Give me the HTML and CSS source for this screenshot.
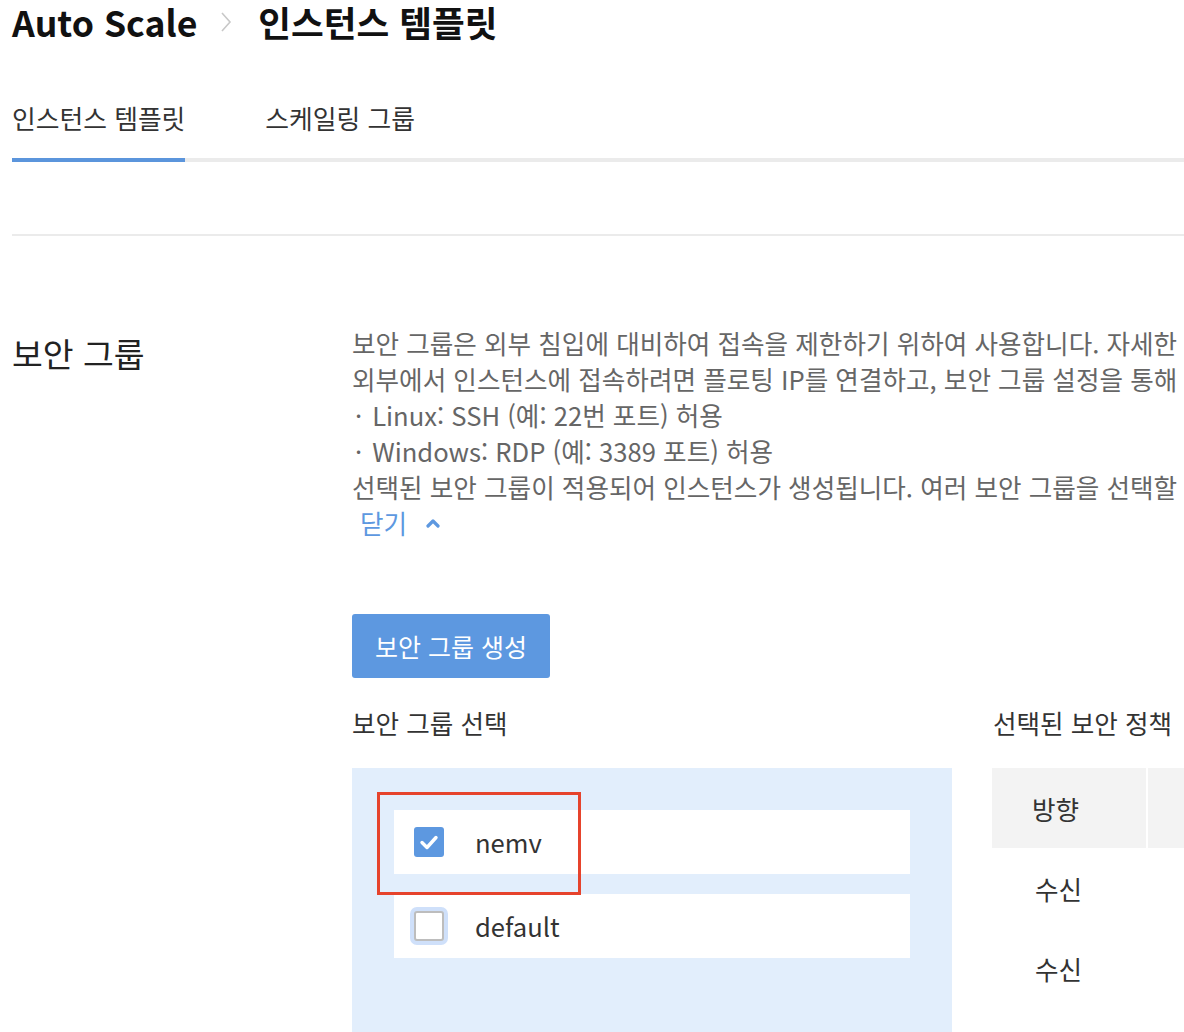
FILE: index.html
```html
<!DOCTYPE html>
<html lang="ko">
<head>
<meta charset="utf-8">
<title>인스턴스 템플릿</title>
<link rel="stylesheet" href="styles.css">
</head>
<body>
<div class="page">
  <h1 class="title">
    <span class="crumb">Auto Scale</span>
    <svg class="crumb-sep" width="14" height="22" viewBox="0 0 14 22" aria-hidden="true"><polyline points="3,2 11,11 3,20" fill="none" stroke="#c8c8c8" stroke-width="1.6"/></svg>
    <span class="crumb current">인스턴스 템플릿</span>
  </h1>

  <nav class="tabs">
    <a class="tab active">인스턴스 템플릿</a>
    <a class="tab">스케일링 그룹</a>
  </nav>

  <div class="divider"></div>

  <section class="section">
    <h2 class="section-title">보안 그룹</h2>
    <div class="section-body">
      <div class="desc">
        <p class="desc-line">보안 그룹은 외부 침입에 대비하여 접속을 제한하기 위하여 사용합니다. 자세한</p>
        <p class="desc-line">외부에서 인스턴스에 접속하려면 플로팅 IP를 연결하고, 보안 그룹 설정을 통해</p>
        <p class="desc-line"><span class="bullet">·</span>Linux: SSH (예: 22번 포트) 허용</p>
        <p class="desc-line"><span class="bullet">·</span>Windows: RDP (예: 3389 포트) 허용</p>
        <p class="desc-line">선택된 보안 그룹이 적용되어 인스턴스가 생성됩니다. 여러 보안 그룹을 선택할</p>
      </div>
      <a class="toggle">닫기
        <svg class="toggle-icon" width="16" height="10" viewBox="0 0 16 10" aria-hidden="true"><polyline points="3,8 8,3 13,8" fill="none" stroke="#5d98e0" stroke-width="3.2" stroke-linecap="round" stroke-linejoin="round"/></svg>
      </a>

      <button class="btn-primary" type="button">보안 그룹 생성</button>

      <div class="selectors">
        <div class="col-left">
          <h3 class="col-title">보안 그룹 선택</h3>
          <div class="sg-panel">
            <label class="sg-row">
              <span class="checkbox checked">
                <svg width="30" height="30" viewBox="0 0 30 30" aria-hidden="true"><polyline points="8,15.5 13,20.5 22,10.5" fill="none" stroke="#fff" stroke-width="3.4" stroke-linecap="round" stroke-linejoin="round"/></svg>
              </span>
              <span class="sg-name">nemv</span>
            </label>
            <label class="sg-row">
              <span class="checkbox focus"></span>
              <span class="sg-name">default</span>
            </label>
            <div class="annotation"></div>
          </div>
        </div>
        <div class="col-right">
          <h3 class="col-title">선택된 보안 정책</h3>
          <div class="policy-table">
            <div class="pt-row head">
              <div class="pt-cell dir">방향</div>
              <div class="pt-cell rest"></div>
            </div>
            <div class="pt-row">
              <div class="pt-cell dir">수신</div>
              <div class="pt-cell rest"></div>
            </div>
            <div class="pt-row">
              <div class="pt-cell dir">수신</div>
              <div class="pt-cell rest"></div>
            </div>
          </div>
        </div>
      </div>
    </div>
  </section>
</div>
</body>
</html>
```

FILE: styles.css
```css
html, body {
  margin: 0;
  padding: 0;
  background: #fff;
  overflow: hidden;
}

body {
  font-family: "Noto Sans CJK KR", "Noto Sans", sans-serif;
  color: #333;
}

.page {
  width: 1500px;
  padding-left: 12px;
}

.title {
  display: flex;
  align-items: center;
  margin: 0;
  height: 44px;
  line-height: 44px;
  font-size: 35.6px;
  font-weight: 700;
  color: #111;
}

.crumb-sep {
  margin: 0 25px 0 22px;
}

.tabs {
  display: flex;
  gap: 80px;
  margin-top: 56px;
  border-bottom: 4px solid #ebebeb;
}

.tab {
  font-size: 25.8px;
  line-height: 36px;
  padding-bottom: 22px;
  color: #333;
  margin-bottom: -4px;
  border-bottom: 4px solid transparent;
}

.tab.active {
  border-bottom-color: #5b95dc;
}

.divider {
  margin-top: 72px;
  height: 2px;
  background: #ebebeb;
}

.section {
  display: flex;
  margin-top: 89px;
}

.section-title {
  width: 340px;
  flex: none;
  margin: 10px 0 0 0;
  font-size: 33.5px;
  line-height: 36px;
  font-weight: 400;
  color: #222;
}

.section-body {
  flex: 1;
}

.desc-line {
  margin: 0;
  font-size: 25.6px;
  line-height: 36px;
  color: #666;
  white-space: nowrap;
}

.bullet {
  display: inline-block;
  padding-left: 3px;
  margin-right: 10px;
}

.toggle {
  display: inline-flex;
  align-items: center;
  gap: 18px;
  padding-left: 8px;
  font-size: 25.6px;
  line-height: 36px;
  color: #5d98e0;
}

.btn-primary {
  display: block;
  margin-top: 73px;
  height: 64px;
  width: 198px;
  padding: 0;
  border: none;
  border-radius: 3px;
  background: #5d98e0;
  color: #fff;
  font-family: inherit;
  font-size: 25px;
}

.selectors {
  display: flex;
  gap: 40px;
  margin-top: 27px;
}

.col-left {
  width: 600px;
  flex: none;
}

.col-right {
  flex: 1;
}

.col-title {
  margin: 0 0 27px 0;
  font-size: 25.6px;
  line-height: 36px;
  font-weight: 400;
  color: #333;
}

.col-right .col-title {
  padding-left: 1px;
}

.sg-panel {
  position: relative;
  background: #e2eefc;
  padding: 42px;
  min-height: 300px;
  display: flex;
  flex-direction: column;
  gap: 20px;
}

.sg-row {
  display: flex;
  align-items: center;
  height: 64px;
  padding-left: 20px;
  background: #fff;
}

.checkbox {
  width: 30px;
  height: 30px;
  box-sizing: border-box;
  border-radius: 3px;
  flex: none;
  display: block;
}

.checkbox.checked {
  background: #5d98e0;
}

.checkbox.checked svg {
  display: block;
}

.checkbox.focus {
  background: #fff;
  border: 2px solid #bdbdbd;
  box-shadow: 0 0 0 4px #cfe0fa;
}

.sg-name {
  margin-left: 31px;
  font-size: 25.6px;
  line-height: 36px;
  color: #333;
}

.annotation {
  position: absolute;
  left: 25px;
  top: 24px;
  width: 204px;
  height: 103px;
  box-sizing: border-box;
  border: 3px solid #e6432c;
}

.policy-table {
  display: flex;
  flex-direction: column;
}

.pt-row {
  display: flex;
  gap: 2px;
  height: 80px;
}

.pt-cell {
  display: flex;
  align-items: center;
  font-size: 25.6px;
  color: #333;
}

.pt-cell.dir {
  width: 154px;
  padding-left: 43px;
  box-sizing: border-box;
}

.pt-row.head .pt-cell.dir {
  padding-left: 40px;
}

.pt-cell.rest {
  flex: 1;
}

.pt-row.head .pt-cell {
  background: #f3f3f3;
}
```
